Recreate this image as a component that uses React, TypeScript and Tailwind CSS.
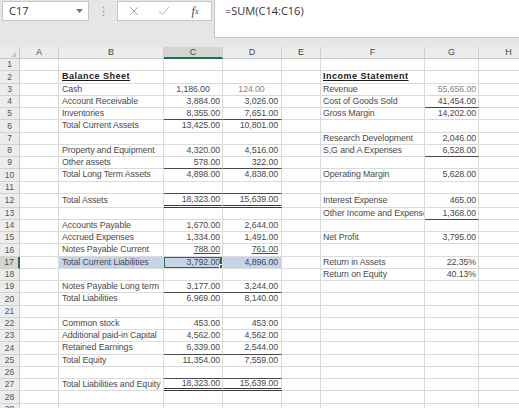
import React from "react";

type Cell = {
  v?: string;
  align?: "left" | "right" | "center";
  bold?: boolean;
  u?: boolean;
  bb?: "thin" | "double";
  dim?: boolean;
};

type Row = {
  n: number;
  tall?: boolean;
  sel?: boolean;
  b?: Cell;
  c?: Cell;
  d?: Cell;
  f?: Cell;
  g?: Cell;
};

const txt = (v: string, extra: Partial<Cell> = {}): Cell => ({ v, align: "left", ...extra });
const num = (v: string, extra: Partial<Cell> = {}): Cell => ({ v, align: "right", ...extra });

const rows: Row[] = [
  { n: 1 },
  { n: 2, b: txt("Balance Sheet", { bold: true }), f: txt("Income Statement", { bold: true }) },
  {
    n: 3,
    b: txt("Cash"),
    c: { v: "1,186.00", align: "center" },
    d: { v: "124.00", align: "center", dim: true },
    f: txt("Revenue"),
    g: num("55,656.00", { dim: true }),
  },
  {
    n: 4,
    b: txt("Account Receivable"),
    c: num("3,884.00"),
    d: num("3,026.00"),
    f: txt("Cost of Goods Sold"),
    g: num("41,454.00", { bb: "thin" }),
  },
  {
    n: 5,
    b: txt("Inventories"),
    c: num("8,355.00", { bb: "thin" }),
    d: num("7,651.00", { bb: "thin" }),
    f: txt("Gross Margin"),
    g: num("14,202.00"),
  },
  { n: 6, b: txt("Total Current Assets"), c: num("13,425.00"), d: num("10,801.00") },
  { n: 7, f: txt("Research Development"), g: num("2,046.00") },
  {
    n: 8,
    b: txt("Property and Equipment"),
    c: num("4,320.00"),
    d: num("4,516.00"),
    f: txt("S,G and A Expenses"),
    g: num("6,528.00", { bb: "thin" }),
  },
  { n: 9, b: txt("Other assets"), c: num("578.00", { bb: "thin" }), d: num("322.00", { bb: "thin" }) },
  {
    n: 10,
    b: txt("Total Long Term Assets"),
    c: num("4,898.00"),
    d: num("4,838.00"),
    f: txt("Operating Margin"),
    g: num("5,628.00"),
  },
  { n: 11, c: { bb: "thin" }, d: { bb: "thin" } },
  {
    n: 12,
    tall: true,
    b: txt("Total Assets"),
    c: num("18,323.00", { bb: "double" }),
    d: num("15,639.00", { bb: "double" }),
    f: txt("Interest Expense"),
    g: num("465.00"),
  },
  { n: 13, f: txt("Other Income and Expenses"), g: num("1,368.00", { bb: "thin" }) },
  { n: 14, b: txt("Accounts Payable"), c: num("1,670.00"), d: num("2,644.00") },
  {
    n: 15,
    b: txt("Accrued Expenses"),
    c: num("1,334.00"),
    d: num("1,491.00"),
    f: txt("Net Profit"),
    g: num("3,795.00"),
  },
  { n: 16, b: txt("Notes Payable Current"), c: num("788.00", { u: true }), d: num("761.00", { u: true }) },
  {
    n: 17,
    sel: true,
    b: txt("Total Current Liabilities"),
    c: num("3,792.00"),
    d: num("4,896.00"),
    f: txt("Return in Assets"),
    g: num("22.35%"),
  },
  { n: 18, f: txt("Return on Equity"), g: num("40.13%") },
  {
    n: 19,
    b: txt("Notes Payable Long term"),
    c: num("3,177.00", { bb: "thin" }),
    d: num("3,244.00", { bb: "thin" }),
  },
  { n: 20, b: txt("Total Liabilities"), c: num("6,969.00"), d: num("8,140.00") },
  { n: 21 },
  { n: 22, b: txt("Common stock"), c: num("453.00"), d: num("453.00") },
  { n: 23, b: txt("Additional paid-in Capital"), c: num("4,562.00"), d: num("4,562.00") },
  {
    n: 24,
    b: txt("Retained Earnings"),
    c: num("6,339.00", { bb: "thin" }),
    d: num("2,544.00", { bb: "thin" }),
  },
  { n: 25, b: txt("Total Equity"), c: num("11,354.00"), d: num("7,559.00") },
  { n: 26, c: { bb: "thin" }, d: { bb: "thin" } },
  {
    n: 27,
    b: txt("Total Liabilities and Equity"),
    c: num("18,323.00", { bb: "double" }),
    d: num("15,639.00", { bb: "double" }),
  },
  { n: 28 },
  { n: 29 },
];

const columns = [
  { key: "a", label: "A", width: "w-[39px]", pad: "pl-[3px] pr-[2px]" },
  { key: "b", label: "B", width: "w-[105px]", pad: "pl-[3px] pr-0" },
  { key: "c", label: "C", width: "w-[59px]", pad: "pl-[2px] pr-[2px]" },
  { key: "d", label: "D", width: "w-[59px]", pad: "pl-[2px] pr-[3px]" },
  { key: "e", label: "E", width: "w-[39px]", pad: "pl-[2px] pr-[2px]" },
  { key: "f", label: "F", width: "w-[104px]", pad: "pl-[2px] pr-0" },
  { key: "g", label: "G", width: "w-[54px]", pad: "pl-[2px] pr-[2px]" },
  { key: "h", label: "H", width: "w-[60px]", pad: "pl-[2px] pr-[2px]" },
] as const;

const SheetCell = ({
  cell,
  width,
  pad,
  selected,
  active,
}: {
  cell?: Cell;
  width: string;
  pad: string;
  selected: boolean;
  active: boolean;
}) => {
  const bottom =
    cell?.bb === "double"
      ? "border-b-[3px] border-double border-b-[#3a3a3a]"
      : cell?.bb === "thin"
        ? "border-b border-b-[#4a4a4a]"
        : "border-b border-b-[#dadada]";
  const justify =
    cell?.align === "right" ? "justify-end" : cell?.align === "center" ? "justify-center" : "justify-start";

  return (
    <div
      className={`relative flex h-full shrink-0 items-center overflow-hidden whitespace-nowrap border-r border-r-[#dadada] ${width} ${pad} ${bottom} ${justify} ${
        selected ? "bg-[#c6d4ea]" : "bg-white"
      }`}
    >
      {cell?.v ? (
        <span
          className={`leading-none ${
            cell.bold
              ? "text-[9px] font-bold tracking-[0.5px] text-[#1a1a1a] underline underline-offset-[1px]"
              : "text-[8.8px] tracking-[-0.1px]"
          } ${cell.u ? "underline underline-offset-[1px]" : ""} ${
            cell.dim ? "text-[#858585]" : cell.bold ? "" : "text-[#4a4a4a]"
          }`}
        >
          {cell.v}
        </span>
      ) : null}
      {active ? (
        <>
          <div className="pointer-events-none absolute -left-px -top-px bottom-[-1px] right-0 border-2 border-[#217346]" />
          <div className="absolute -bottom-[1px] right-[-2px] h-[5px] w-[5px] border border-white bg-[#217346]" />
        </>
      ) : null}
    </div>
  );
};

export default function App() {
  return (
    <div className="h-[408px] w-[519px] overflow-hidden bg-[#e6e6e6] font-['Liberation_Sans',Arial,sans-serif]">
      {/* formula bar */}
      <div className="flex h-[47px] items-start pl-[2px] pt-[1px]">
        <div className="flex h-[20px] w-[87px] items-center justify-between border border-[#c6c6c6] bg-white pl-[6px] pr-[5px]">
          <span className="font-['Open_Sans',sans-serif] text-[11px] text-[#333]">C17</span>
          <svg width="7" height="4" viewBox="0 0 7 4">
            <path d="M0 0 L7 0 L3.5 4 Z" fill="#777" />
          </svg>
        </div>
        <div className="flex h-[20px] w-[28px] items-center justify-center">
          <svg width="3" height="11" viewBox="0 0 3 11">
            <circle cx="1.5" cy="1.5" r="1" fill="#aaa" />
            <circle cx="1.5" cy="5.5" r="1" fill="#aaa" />
            <circle cx="1.5" cy="9.5" r="1" fill="#aaa" />
          </svg>
        </div>
        <div className="flex h-[20px] w-[95px] items-center border border-[#c6c6c6] bg-white">
          <div className="flex w-[31px] justify-center">
            <svg width="10" height="10" viewBox="0 0 10 10">
              <path d="M1 1 L9 9 M9 1 L1 9" stroke="#a3a3a3" strokeWidth="1" fill="none" />
            </svg>
          </div>
          <div className="flex w-[30px] justify-center">
            <svg width="12" height="10" viewBox="0 0 12 10">
              <path d="M1 5 L4.5 8.5 L11 1" stroke="#b5b5b5" strokeWidth="1" fill="none" />
            </svg>
          </div>
          <div className="flex w-[32px] justify-center font-['Liberation_Serif',serif] italic text-[#444]">
            <span className="text-[12px] leading-none">f</span>
            <span className="mt-[3px] text-[8px] leading-none">x</span>
          </div>
        </div>
        <div className="ml-[2px] -mt-[1px] flex h-[38px] flex-1 items-start border-b border-l border-[#c6c6c6] bg-white pl-[10px] pt-[3px]">
          <span className="font-['Open_Sans',sans-serif] text-[11px] text-[#333]">=SUM(C14:C16)</span>
        </div>
      </div>

      {/* column headers */}
      <div className="flex h-[12px]">
        <div className="relative flex h-full w-[20px] shrink-0 items-end justify-end border-b border-r border-[#c8c8c8] bg-[#ececec] pb-[1px] pr-[3px]">
          <svg width="5" height="5" viewBox="0 0 5 5">
            <path d="M5 0 L5 5 L0 5 Z" fill="#c4c4c4" />
          </svg>
        </div>
        {columns.map((col) => (
          <div
            key={col.key}
            className={`flex h-full shrink-0 items-center justify-center border-r border-r-[#cfcfcf] text-[9px] leading-none ${col.width} ${
              col.key === "c"
                ? "border-b-2 border-b-[#217346] bg-[#d4d4d4] text-[#1e5c38]"
                : "border-b border-b-[#c8c8c8] bg-[#ececec] text-[#444]"
            }`}
          >
            {col.label}
          </div>
        ))}
      </div>

      {/* grid */}
      <div className="flex flex-col">
        {rows.map((row) => (
          <div key={row.n} className={`flex ${row.tall ? "h-[13.75px]" : "h-[12.25px]"}`}>
            <div
              className={`flex h-full w-[20px] shrink-0 items-center justify-center border-b border-b-[#d2d2d2] text-[8.5px] leading-none ${
                row.sel
                  ? "border-r-2 border-r-[#217346] bg-[#d4d4d4] text-[#1e5c38]"
                  : "border-r border-r-[#c8c8c8] bg-[#ececec] text-[#555]"
              }`}
            >
              {row.n}
            </div>
            {columns.map((col) => {
              const cell = (row as Record<string, unknown>)[col.key] as Cell | undefined;
              const selected = !!row.sel && (col.key === "b" || col.key === "c" || col.key === "d");
              return (
                <SheetCell
                  key={col.key}
                  cell={cell}
                  width={col.width}
                  pad={col.pad}
                  selected={selected}
                  active={!!row.sel && col.key === "c"}
                />
              );
            })}
          </div>
        ))}
      </div>
    </div>
  );
}
